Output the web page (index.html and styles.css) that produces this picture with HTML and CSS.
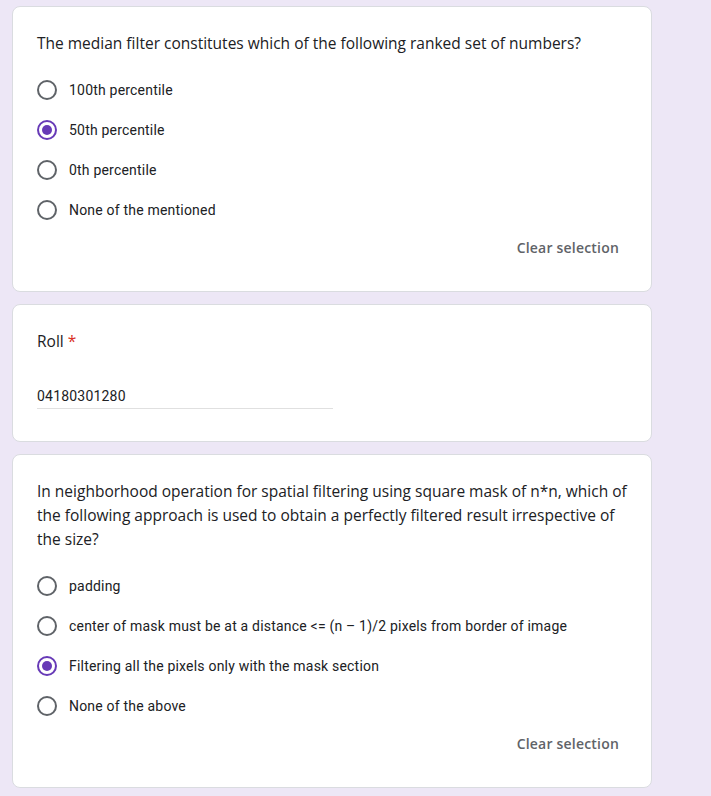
FILE: index.html
```html
<!DOCTYPE html>
<html lang="en">
<head>
<meta charset="utf-8">
<title>Form</title>
<link rel="stylesheet" href="styles.css">
</head>
<body>
<main class="page">
  <section class="card">
    <div class="title">The median filter constitutes which of the following ranked set of numbers?</div>
    <div class="options">
      <label class="option"><span class="radio"></span><span class="opt-text">100th percentile</span></label>
      <label class="option"><span class="radio checked"></span><span class="opt-text">50th percentile</span></label>
      <label class="option"><span class="radio"></span><span class="opt-text">0th percentile</span></label>
      <label class="option"><span class="radio"></span><span class="opt-text">None of the mentioned</span></label>
    </div>
    <div class="actions"><span class="clear">Clear selection</span></div>
  </section>

  <section class="card card-input">
    <div class="title">Roll <span class="req">*</span></div>
    <div class="input">04180301280</div>
  </section>

  <section class="card">
    <div class="title">In neighborhood operation for spatial filtering using square mask of n*n, which of the following approach is used to obtain a perfectly filtered result irrespective of the size?</div>
    <div class="options">
      <label class="option"><span class="radio"></span><span class="opt-text">padding</span></label>
      <label class="option"><span class="radio"></span><span class="opt-text">center of mask must be at a distance &lt;= (n – 1)/2 pixels from border of image</span></label>
      <label class="option"><span class="radio checked"></span><span class="opt-text">Filtering all the pixels only with the mask section</span></label>
      <label class="option"><span class="radio"></span><span class="opt-text">None of the above</span></label>
    </div>
    <div class="actions"><span class="clear">Clear selection</span></div>
  </section>
</main>
</body>
</html>
```

FILE: styles.css
```css
* { box-sizing: border-box; }
html, body { margin: 0; padding: 0; }
body {
  background: #ede7f6;
  font-family: Roboto, "Liberation Sans", sans-serif;
  color: #202124;
}
.page {
  padding: 6px 0 0 12px;
  width: 652px;
  display: flex;
  flex-direction: column;
  gap: 12px;
}
.card {
  background: #fff;
  border: 1px solid #dadce0;
  border-radius: 8px;
  padding: 24px 24px 25px 24px;
}
.title {
  font-family: "Open Sans", sans-serif;
  font-size: 15.5px;
  line-height: 24px;
  color: #202124;
  margin-right: -4px;
}
.req { color: #d93025; }
.options {
  margin-top: 15px;
  display: flex;
  flex-direction: column;
}
.option {
  height: 40px;
  display: flex;
  align-items: center;
  gap: 12px;
}
.radio {
  width: 20px;
  height: 20px;
  border: 2px solid #5f6368;
  border-radius: 50%;
  display: flex;
  align-items: center;
  justify-content: center;
  flex: none;
}
.radio.checked { border-color: #673ab7; }
.radio.checked::after {
  content: "";
  width: 10px;
  height: 10px;
  border-radius: 50%;
  background: #673ab7;
}
.opt-text {
  font-size: 14px;
  line-height: 20px;
  color: #202124;
  letter-spacing: .2px;
}
.actions {
  display: flex;
  justify-content: flex-end;
}
.clear {
  font-family: "Open Sans", sans-serif;
  font-weight: 600;
  font-size: 14px;
  color: #5f6368;
  height: 36px;
  line-height: 36px;
  padding: 0 8px;
  letter-spacing: .2px;
}
.card-input { padding-bottom: 32px; }
.input {
  margin-top: 32px;
  width: 296px;
  font-size: 14px;
  line-height: 23px;
  border-bottom: 1px solid #e0e0e0;
  letter-spacing: .2px;
}
```
